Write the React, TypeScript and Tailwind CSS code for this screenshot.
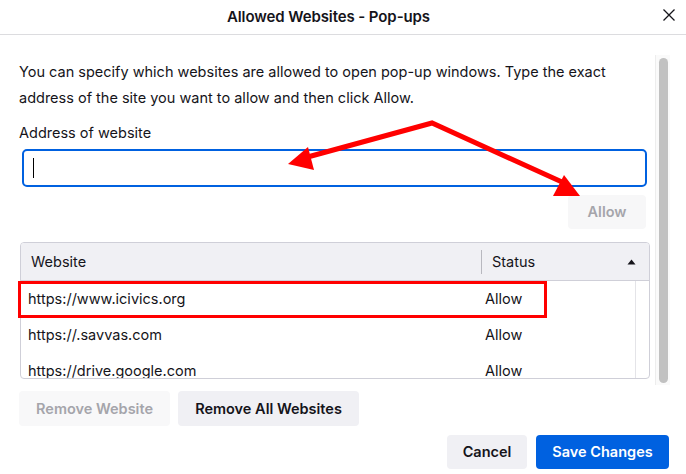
import React from "react"

const sites = [
  { url: "https://www.icivics.org", status: "Allow" },
  { url: "https://.savvas.com", status: "Allow" },
  { url: "https://drive.google.com", status: "Allow" },
]

export default function App() {
  return (
    <div
      className="relative w-[686px] h-[474px] overflow-hidden bg-white text-[#15141a]"
      style={{ fontFamily: "Inter, 'Noto Sans', sans-serif" }}
    >
      {/* Titel */}
      <div className="relative flex h-[35px] items-center justify-center border-b border-[#dcdcdf] pr-[29px]">
        <span className="text-[15px] font-semibold tracking-[-0.1px]">Allowed Websites - Pop-ups</span>
        <svg className="absolute right-[11px] top-[9px] h-[12px] w-[12px]" viewBox="0 0 12 12" fill="none" stroke="#15141a" strokeWidth="1.3">
          <path d="M0.5 0.5 L11.5 11.5 M11.5 0.5 L0.5 11.5" />
        </svg>
      </div>

      {/* Innehåll + scrollbar */}
      <div className="flex">
        <div className="ml-[19px] w-[632px] flex flex-col">
          <p className="mt-[24px] text-[14.5px] leading-[26px]">
            You can specify which websites are allowed to open pop-up windows. Type the exact address of the site you want to allow and then click Allow.
          </p>

          <label className="mt-[12px] text-[14.5px] leading-[20px]">Address of website</label>

          <div className="mt-[6px] ml-[3px] flex h-[38px] w-[625px] items-center rounded-[5px] border-2 border-[#0061e0] pl-[9px]">
            <div className="h-[20px] w-[1px] bg-black" />
          </div>

          <div className="mt-[8px] flex justify-end pr-[5px]">
            <button className="h-[34px] w-[78px] rounded-[4px] bg-[#f7f7f8] text-[14.5px] font-semibold text-[#a5a5ab]">
              Allow
            </button>
          </div>

          {/* Tabell */}
          <div className="mt-[13px] ml-[1px] h-[137px] w-[630px] overflow-hidden rounded-[4px] border border-[#cfcfd8]">
            <div className="flex h-[38px] items-center border-b border-[#cfcfd8] bg-[#f0f0f4] text-[14.5px]">
              <div className="w-[460px] pl-[10px]">Website</div>
              <div className="h-[24px] w-[1px] bg-[#b8b8bf]" />
              <div className="flex flex-1 items-center justify-between pl-[10px] pr-[13px]">
                <span>Status</span>
                <svg width="9" height="6" viewBox="0 0 9 6">
                  <path d="M4.5 0.5 L8.5 5.5 L0.5 5.5 Z" fill="#15141a" />
                </svg>
              </div>
            </div>
            <div className="flex">
              <div className="w-[614px] flex flex-col">
                {sites.map((s) => (
                  <div key={s.url} className="flex h-[36px] shrink-0 items-center pl-[7px] text-[14.5px]">
                    <div className="w-[457px]">{s.url}</div>
                    <div>{s.status}</div>
                  </div>
                ))}
              </div>
              <div className="flex-1 border-l border-[#e4e4e8]" />
            </div>
          </div>

          <div className="mt-[12px] flex gap-[8px]">
            <button className="h-[35px] w-[151px] rounded-[4px] bg-[#f8f8f9] text-[14.5px] font-semibold text-[#a5a5ab]">
              Remove Website
            </button>
            <button className="h-[35px] w-[181px] rounded-[4px] bg-[#f0f0f4] text-[14.5px] font-semibold">
              Remove All Websites
            </button>
          </div>
        </div>

        {/* Scrollbar */}
        <div className="ml-[4px] mt-[20px] flex h-[330px] w-[15px] justify-center border-l border-[#ededed] bg-[#fafafa] pt-[3px]">
          <div className="h-[325px] w-[9px] rounded-full bg-[#c1c1c1]" />
        </div>
      </div>

      {/* Knappar */}
      <div className="mt-[9px] flex justify-end gap-[9px] pr-[17px]">
        <button className="h-[34px] w-[80px] rounded-[4px] bg-[#f0f0f4] text-[14.5px] font-semibold">Cancel</button>
        <button className="h-[34px] w-[133px] rounded-[4px] bg-[#0061e0] text-[14.5px] font-semibold text-white">
          Save Changes
        </button>
      </div>

      {/* Markeringar */}
      <svg className="pointer-events-none absolute inset-0" width="686" height="474" viewBox="0 0 686 474">
        <polyline points="304,158 432,123 562,182" fill="none" stroke="#ff0000" strokeWidth="5" strokeLinejoin="miter" />
        <polygon points="288,164 308,147 314,170" fill="#ff0000" />
        <polygon points="564,175 553,196 580,196" fill="#ff0000" />
        <rect x="19.5" y="282.5" width="526" height="34" fill="none" stroke="#ff0000" strokeWidth="3" />
      </svg>
    </div>
  )
}
